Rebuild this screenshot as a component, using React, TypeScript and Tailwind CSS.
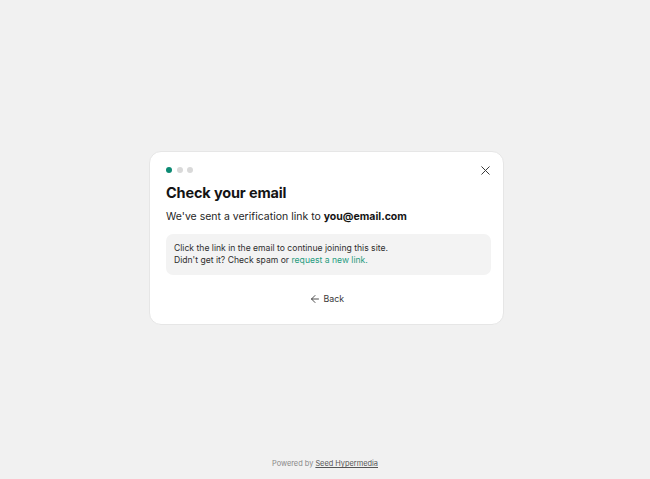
import { ArrowLeft, X } from "lucide-react";

export default function App() {
  return (
    <div
      className="h-screen flex flex-col bg-[#f1f1f1] text-[#1a1a1a]"
      style={{ fontFamily: "Inter, 'Noto Sans', sans-serif" }}
    >
      <main className="flex-1 flex items-center justify-center pt-[27px] pl-[3px]">
        <div className="w-[355px] bg-white rounded-[12px] border border-[#e6e6e6] px-4 pt-[14px] pb-[19px]">
          {/* шапка: шаги и закрыть */}
          <div className="flex items-center justify-between h-[8px]">
            <div className="flex items-center gap-[4.5px]">
              <span className="w-[6px] h-[6px] rounded-full bg-[#0c8a73]" />
              <span className="w-[6px] h-[6px] rounded-full bg-[#d9d9d9]" />
              <span className="w-[6px] h-[6px] rounded-full bg-[#d9d9d9]" />
            </div>
            <button className="text-[#3a3a3a] -mr-[6px]">
              <X size={15} strokeWidth={1.6} />
            </button>
          </div>
          <h1 className="mt-[9px] text-[14.5px] leading-[20px] font-bold tracking-[-0.01em] text-[#141414]">
            Check your email
          </h1>
          <p className="mt-[6px] text-[10.5px] leading-[16px] text-[#1f1f1f]">
            We&apos;ve sent a verification link to{" "}
            <span className="font-bold text-[#141414]">you@email.com</span>
          </p>
          <div className="mt-[9px] -mr-[4px] rounded-[7px] bg-[#f3f3f3] px-2 pt-[8px] pb-[9px] text-[8.6px] leading-[12px] text-[#2e2e2e]">
            <p>Click the link in the email to continue joining this site.</p>
            <p>
              Didn&apos;t get it? Check spam or{" "}
              <a href="#" className="text-[#1f9b80]">
                request a new link.
              </a>
            </p>
          </div>
          <div className="mt-[18px] flex justify-center">
            <button className="flex items-center gap-[2.5px] text-[8.8px] leading-[12px] text-[#3a3a3a]">
              <ArrowLeft size={12} strokeWidth={1.8} />
              Back
            </button>
          </div>
        </div>
      </main>
      <footer className="h-[30px] flex items-center justify-center text-[7.4px] text-[#888]">
        Powered by&nbsp;
        <a href="#" className="underline text-[#555]">
          Seed Hypermedia
        </a>
      </footer>
    </div>
  );
}
